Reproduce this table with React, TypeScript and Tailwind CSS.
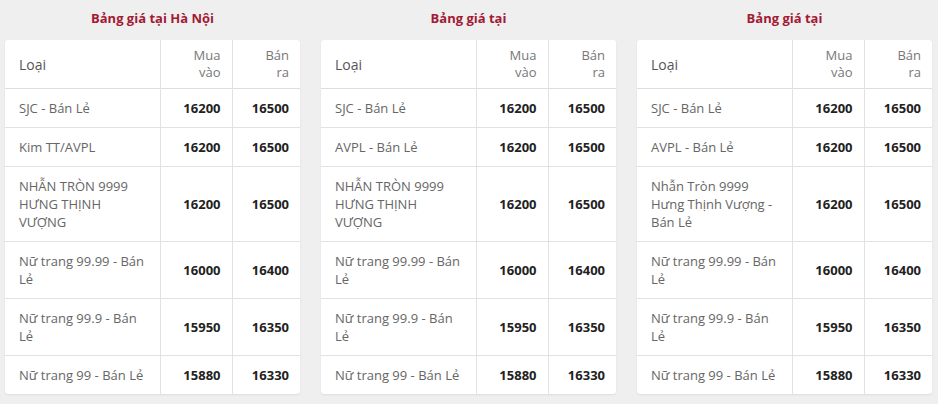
import React from "react";

type Row = { name: string; buy: string; sell: string };

const tables: { title: string; rows: Row[] }[] = [
  {
    title: "Bảng giá tại Hà Nội",
    rows: [
      { name: "SJC - Bán Lẻ", buy: "16200", sell: "16500" },
      { name: "Kim TT/AVPL", buy: "16200", sell: "16500" },
      { name: "NHẪN TRÒN 9999 HƯNG THỊNH VƯỢNG", buy: "16200", sell: "16500" },
      { name: "Nữ trang 99.99 - Bán Lẻ", buy: "16000", sell: "16400" },
      { name: "Nữ trang 99.9 - Bán Lẻ", buy: "15950", sell: "16350" },
      { name: "Nữ trang 99 - Bán Lẻ", buy: "15880", sell: "16330" },
    ],
  },
  {
    title: "Bảng giá tại",
    rows: [
      { name: "SJC - Bán Lẻ", buy: "16200", sell: "16500" },
      { name: "AVPL - Bán Lẻ", buy: "16200", sell: "16500" },
      { name: "NHẪN TRÒN 9999 HƯNG THỊNH VƯỢNG", buy: "16200", sell: "16500" },
      { name: "Nữ trang 99.99 - Bán Lẻ", buy: "16000", sell: "16400" },
      { name: "Nữ trang 99.9 - Bán Lẻ", buy: "15950", sell: "16350" },
      { name: "Nữ trang 99 - Bán Lẻ", buy: "15880", sell: "16330" },
    ],
  },
  {
    title: "Bảng giá tại",
    rows: [
      { name: "SJC - Bán Lẻ", buy: "16200", sell: "16500" },
      { name: "AVPL - Bán Lẻ", buy: "16200", sell: "16500" },
      { name: "Nhẫn Tròn 9999 Hưng Thịnh Vượng - Bán Lẻ", buy: "16200", sell: "16500" },
      { name: "Nữ trang 99.99 - Bán Lẻ", buy: "16000", sell: "16400" },
      { name: "Nữ trang 99.9 - Bán Lẻ", buy: "15950", sell: "16350" },
      { name: "Nữ trang 99 - Bán Lẻ", buy: "15880", sell: "16330" },
    ],
  },
];

function PriceTable({ title, rows }: { title: string; rows: Row[] }) {
  return (
    <div className="w-[295px] flex flex-col">
      <div className="h-[40px] flex items-center justify-center text-[13px] font-bold text-[#a21a34] pb-[3px]">
        {title}
      </div>
      <div className="bg-white rounded-[3px] shadow-[0_1px_2px_rgba(0,0,0,0.08)] overflow-hidden">
        <table className="w-full table-fixed border-collapse text-[13px] leading-[18px]">
          <colgroup>
            <col className="w-[155px]" />
            <col className="w-[72px]" />
            <col className="w-[68px]" />
          </colgroup>
          <thead>
            <tr className="border-b border-[#dedede]">
              <th className="text-left font-normal text-[#555] text-[14px] pl-[14px] pr-[10px] py-[7px] leading-[17px]">
                Loại
              </th>
              <th className="text-right font-normal text-[#777] pr-[11px] pl-[6px] py-[7px] leading-[17px] border-l border-[#e2e2e2]">
                Mua
                <br />
                vào
              </th>
              <th className="text-right font-normal text-[#777] pr-[11px] pl-[6px] py-[7px] leading-[17px] border-l border-[#e2e2e2]">
                Bán
                <br />
                ra
              </th>
            </tr>
          </thead>
          <tbody>
            {rows.map((r, i) => (
              <tr key={i} className={i < rows.length - 1 ? "border-b border-[#e2e2e2]" : ""}>
                <td className="text-left text-[#666] pl-[14px] pr-[12px] py-[10px] align-middle">
                  {r.name}
                </td>
                <td className="text-right font-bold text-[#222] pr-[11px] pl-[4px] py-[10px] align-middle border-l border-[#e2e2e2]">
                  {r.buy}
                </td>
                <td className="text-right font-bold text-[#222] pr-[11px] pl-[4px] py-[10px] align-middle border-l border-[#e2e2e2]">
                  {r.sell}
                </td>
              </tr>
            ))}
          </tbody>
        </table>
      </div>
    </div>
  );
}

export default function App() {
  return (
    <div
      className="w-[938px] h-[404px] bg-[#efefef] overflow-hidden flex gap-[21px] pl-[5px]"
      style={{ fontFamily: '"Open Sans", "Noto Sans", Arial, sans-serif' }}
    >
      {tables.map((t, i) => (
        <PriceTable key={i} title={t.title} rows={t.rows} />
      ))}
    </div>
  );
}
